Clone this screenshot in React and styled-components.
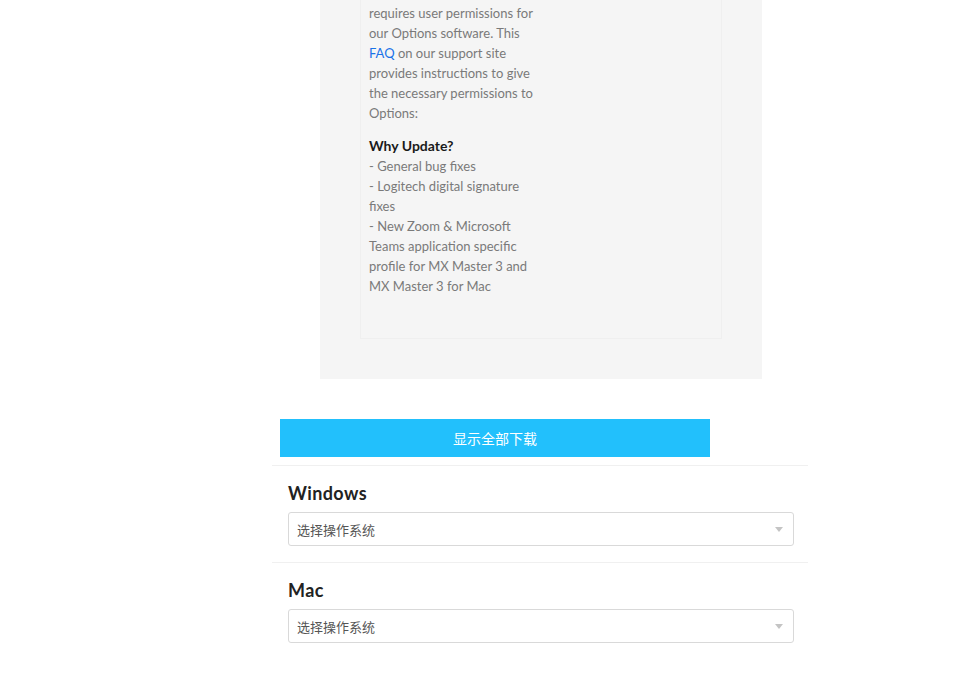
import React from "react"
import styled, { createGlobalStyle } from "styled-components"

const GlobalStyle = createGlobalStyle`
  body {
    margin: 0;
    background: #fff;
    font-family: Lato, "Noto Sans CJK SC", sans-serif;
  }
`

const Page = styled.div`
  width: 536px;
  margin-left: 272px;
`

const NotesPanel = styled.div`
  width: 442px;
  margin-left: 48px;
  background-color: #f5f5f5;
  padding: 0 40px 40px;
  box-sizing: border-box;
  overflow: hidden;
`

const NotesCard = styled.div`
  margin-top: -18px;
  border: 1px solid #efefef;
  padding: 20px 8px 42px;
`

const NotesText = styled.div`
  width: 172px;
  font-size: 13px;
  line-height: 20px;
  color: #7a7a7a;

  p {
    margin: 0 0 13px;
  }

  p:last-child {
    margin-bottom: 0;
  }

  a {
    color: #1a73e8;
    text-decoration: none;
  }

  strong {
    display: block;
    font-size: 14px;
    color: #1a1a1a;
  }
`

const ShowAllButton = styled.button`
  display: block;
  width: 430px;
  height: 38px;
  margin: 40px 0 0 8px;
  border: 0;
  background-color: #22c0fc;
  color: #fff;
  font-family: "Noto Sans CJK SC", sans-serif;
  font-size: 14px;
  cursor: pointer;
`

const OsBlock = styled.section`
  border-top: 1px solid #f0f0f0;
  padding: 15px 14px 16px 16px;

  &:first-of-type {
    margin-top: 8px;
  }
`

const OsTitle = styled.h3`
  margin: 0;
  font-size: 18px;
  line-height: 24px;
  font-weight: 700;
  color: #222;
  letter-spacing: 0.4px;
`

const SelectBox = styled.div`
  position: relative;
  height: 34px;
  margin-top: 7px;
  box-sizing: border-box;
  border: 1px solid #d9d9d9;
  border-radius: 3px;
  background: #fff;
  display: flex;
  align-items: center;
  padding-left: 8px;
  font-family: "Noto Sans CJK SC", sans-serif;
  font-size: 13px;
  color: #555;

  &:after {
    content: "";
    position: absolute;
    right: 10px;
    top: 14px;
    border-left: 4px solid transparent;
    border-right: 4px solid transparent;
    border-top: 5px solid #c4c4c4;
  }
`

function OsPicker({ name }) {
  return (
    <OsBlock>
      <OsTitle>{name}</OsTitle>
      <SelectBox>选择操作系统</SelectBox>
    </OsBlock>
  )
}

export default function App() {
  return (
    <Page>
      <GlobalStyle />
      <NotesPanel>
        <NotesCard>
          <NotesText>
            <p>
              requires user permissions for our Options software. This{" "}
              <a href="#faq">FAQ</a> on our support site provides instructions
              to give the necessary permissions to Options:
            </p>
            <p>
              <strong>Why Update?</strong>
              - General bug fixes
              <br />- Logitech digital signature fixes
              <br />- New Zoom &amp; Microsoft Teams application specific
              profile for MX Master 3 and MX Master 3 for Mac
            </p>
          </NotesText>
        </NotesCard>
      </NotesPanel>
      <ShowAllButton>显示全部下载</ShowAllButton>
      <OsPicker name="Windows" />
      <OsPicker name="Mac" />
    </Page>
  )
}
